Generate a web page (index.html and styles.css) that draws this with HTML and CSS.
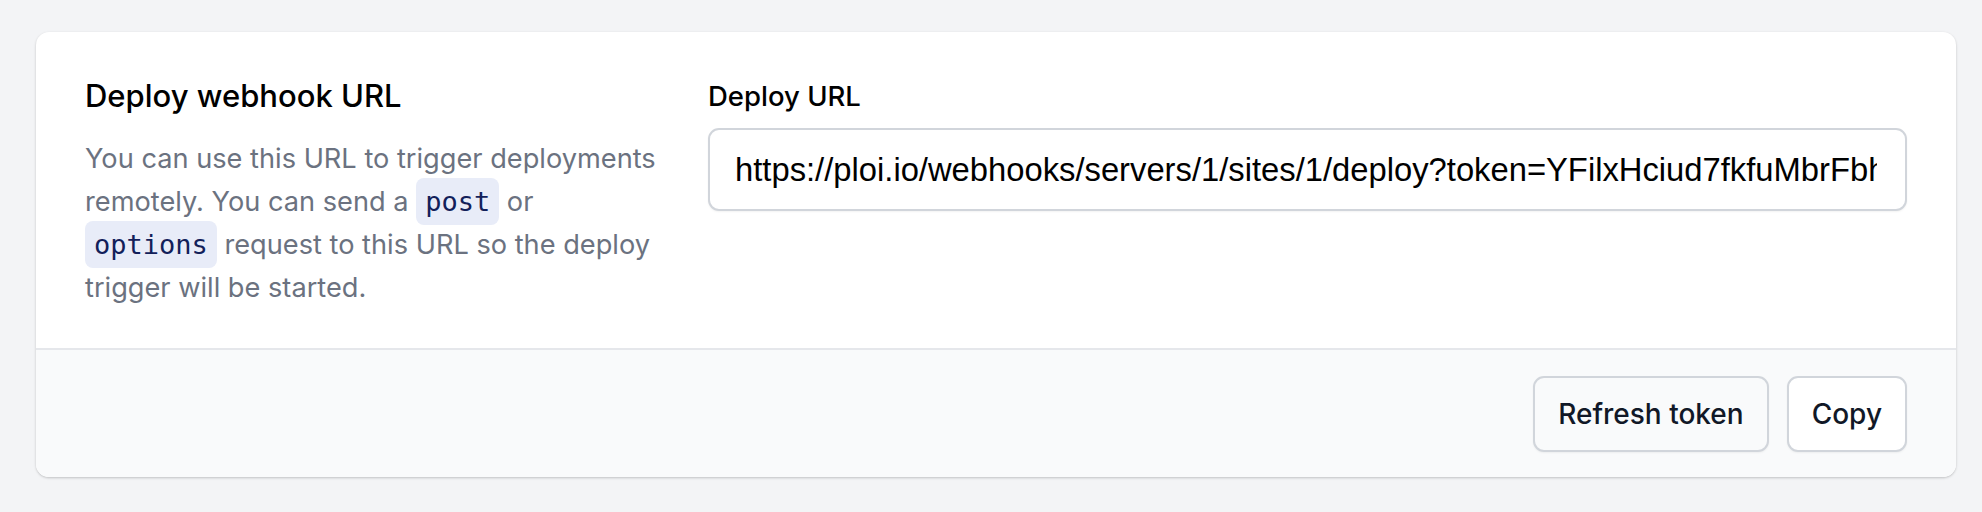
FILE: index.html
```html
<!DOCTYPE html>
<html lang="en">
<head>
<meta charset="utf-8">
<title>Deploy webhook URL</title>
<link rel="stylesheet" href="styles.css">
</head>
<body>
<main class="page">
  <section class="card">
    <div class="card-body">
      <div class="intro">
        <h2 class="intro-title">Deploy webhook URL</h2>
        <p class="intro-text">You can use this URL to trigger deployments remotely. You can send a <code class="chip">post</code> or <code class="chip">options</code> request to this URL so the deploy trigger will be started.</p>
      </div>
      <div class="field">
        <label class="field-label" for="deploy-url">Deploy URL</label>
        <input class="field-input" id="deploy-url" type="text" readonly value="https://ploi.io/webhooks/servers/1/sites/1/deploy?token=YFilxHciud7fkfuMbrFbhQw2kJd9sLx0">
      </div>
    </div>
    <div class="card-footer">
      <button class="btn btn-muted" type="button">Refresh token</button>
      <button class="btn" type="button">Copy</button>
    </div>
  </section>
</main>
</body>
</html>
```

FILE: styles.css
```css
* {
  box-sizing: border-box;
}

html, body {
  margin: 0;
  padding: 0;
  background: #f3f4f6;
}

body {
  font-family: Inter, "Noto Sans", sans-serif;
  color: #111827;
}

.page {
  padding: 32px 26px 36px 36px;
}

.card {
  background: #ffffff;
  border-radius: 13px;
  box-shadow: 0 1px 3px rgba(0, 0, 0, 0.14), 0 1px 2px rgba(0, 0, 0, 0.08);
  overflow: hidden;
}

.card-body {
  display: grid;
  grid-template-columns: repeat(3, 1fr);
  column-gap: 47px;
  padding: 46px 49px 40px 49px;
  height: 316px;
}

.intro-title {
  margin: 0;
  font-size: 31px;
  line-height: 36px;
  font-weight: 500;
  color: #000000;
}

.intro-text {
  margin: 23px 0 0 0;
  font-size: 27.2px;
  line-height: 43px;
  color: #6b7280;
}

.chip {
  font-family: "DejaVu Sans Mono", "Liberation Mono", monospace;
  font-size: 27px;
  color: #12205a;
  background: #e8ecf8;
  border-radius: 8px;
  padding: 8px 9px;
}

.field {
  grid-column: span 2;
  display: flex;
  flex-direction: column;
}

.field-label {
  font-size: 27.5px;
  line-height: 36px;
  font-weight: 500;
  color: #000000;
}

.field-input {
  margin-top: 14px;
  height: 83px;
  width: 100%;
  padding: 0 28px 0 25px;
  border: 2px solid #d1d5db;
  border-radius: 11px;
  background: #ffffff;
  box-shadow: 0 1px 2px rgba(0, 0, 0, 0.05);
  font-family: "Liberation Sans", Arial, sans-serif;
  font-size: 32.75px;
  color: #000000;
  outline: none;
}

.card-footer {
  display: flex;
  justify-content: flex-end;
  gap: 18px;
  padding: 26px 49px 25px 49px;
  background: #f9fafb;
  border-top: 2px solid #e5e7eb;
}

.btn {
  height: 76px;
  padding: 0 23px;
  border: 2px solid #d1d5db;
  border-radius: 11px;
  background: #ffffff;
  box-shadow: 0 1px 2px rgba(0, 0, 0, 0.05);
  font-family: Inter, "Noto Sans", sans-serif;
  font-size: 28px;
  font-weight: 500;
  color: #111827;
  cursor: pointer;
}

.btn-muted {
  background: #f9fafb;
}
```
